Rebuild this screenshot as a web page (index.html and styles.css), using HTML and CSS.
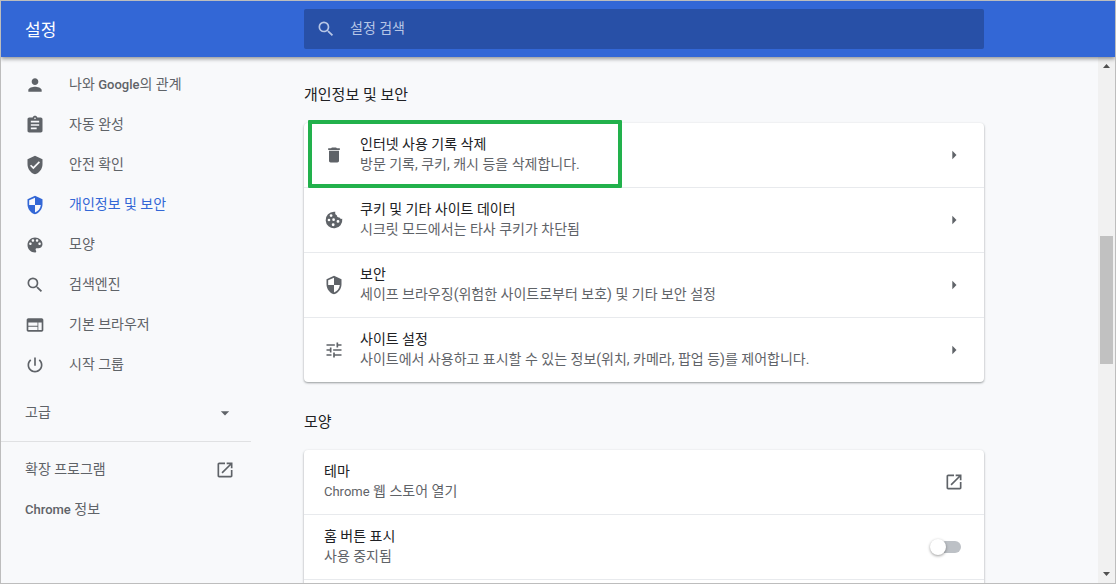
FILE: index.html
```html
<!DOCTYPE html>
<html lang="ko">
<head>
    <meta charset="UTF-8">
    <meta name="viewport" content="width=device-width, initial-scale=1.0">
    <title>설정</title>
    <link rel="stylesheet" href="styles.css">
</head>
<body>
    <header class="header">
        <h1>설정</h1>
        <label class="search">
            <svg class="icon" viewBox="0 0 24 24"><path d="M15.5 14h-.79l-.28-.27A6.47 6.47 0 0 0 16 9.5 6.5 6.5 0 1 0 9.5 16c1.61 0 3.09-.59 4.23-1.57l.27.28v.79l5 4.99L20.49 19l-4.99-5zm-6 0C7.01 14 5 11.99 5 9.5S7.01 5 9.5 5 14 7.01 14 9.5 11.99 14 9.5 14z"/></svg>
            <input type="search" placeholder="설정 검색" aria-label="설정 검색">
        </label>
    </header>
    <div class="body">
        <nav class="sidebar">
            <a href="#"><svg class="icon" viewBox="0 0 24 24"><path d="M12 12c2.21 0 4-1.79 4-4s-1.79-4-4-4-4 1.79-4 4 1.79 4 4 4zm0 2c-2.67 0-8 1.34-8 4v2h16v-2c0-2.66-5.33-4-8-4z"/></svg><span class="name">나와 <span class="latin">Google</span>의 관계</span></a>
            <a href="#"><svg class="icon" viewBox="0 0 24 24"><path d="M19 3h-4.18C14.4 1.84 13.3 1 12 1s-2.4.84-2.82 2H5c-1.1 0-2 .9-2 2v14c0 1.1.9 2 2 2h14c1.1 0 2-.9 2-2V5c0-1.1-.9-2-2-2zm-7 0c.55 0 1 .45 1 1s-.45 1-1 1-1-.45-1-1 .45-1 1-1zm2 14H7v-2h7v2zm3-4H7v-2h10v2zm0-4H7V7h10v2z"/></svg><span class="name">자동 완성</span></a>
            <a href="#"><svg class="icon" viewBox="0 0 24 24"><path d="M12 1L3 5v6c0 5.55 3.84 10.74 9 12 5.16-1.26 9-6.45 9-12V5l-9-4zm-2 16l-4-4 1.41-1.41L10 14.17l6.59-6.59L18 9l-8 8z"/></svg><span class="name">안전 확인</span></a>
            <a href="#" class="selected"><svg class="icon" viewBox="0 0 24 24"><path d="M12 1L3 5v6c0 5.55 3.84 10.74 9 12 5.16-1.26 9-6.45 9-12V5l-9-4zm0 10.99h7c-.53 4.12-3.28 7.79-7 8.94V12H5V6.3l7-3.11v8.8z"/></svg><span class="name">개인정보 및 보안</span></a>
            <a href="#"><svg class="icon" viewBox="0 0 24 24"><path d="M12 3c-4.97 0-9 4.03-9 9s4.03 9 9 9c.83 0 1.5-.67 1.5-1.5 0-.39-.15-.74-.39-1.01-.23-.26-.38-.61-.38-.99 0-.83.67-1.5 1.5-1.5H16c2.76 0 5-2.24 5-5 0-4.42-4.03-8-9-8zm-5.5 9c-.83 0-1.5-.67-1.5-1.5S5.67 9 6.5 9 8 9.67 8 10.5 7.33 12 6.5 12zm3-4C8.67 8 8 7.33 8 6.5S8.67 5 9.5 5s1.5.67 1.5 1.5S10.33 8 9.5 8zm5 0c-.83 0-1.5-.67-1.5-1.5S13.67 5 14.5 5s1.5.67 1.5 1.5S15.33 8 14.5 8zm3 4c-.83 0-1.5-.67-1.5-1.5S16.67 9 17.5 9s1.5.67 1.5 1.5-.67 1.5-1.5 1.5z"/></svg><span class="name">모양</span></a>
            <a href="#"><svg class="icon" viewBox="0 0 24 24"><path d="M15.5 14h-.79l-.28-.27A6.47 6.47 0 0 0 16 9.5 6.5 6.5 0 1 0 9.5 16c1.61 0 3.09-.59 4.23-1.57l.27.28v.79l5 4.99L20.49 19l-4.99-5zm-6 0C7.01 14 5 11.99 5 9.5S7.01 5 9.5 5 14 7.01 14 9.5 11.99 14 9.5 14z"/></svg><span class="name">검색엔진</span></a>
            <a href="#"><svg class="icon" viewBox="0 0 24 24"><path d="M20 4H4c-1.1 0-1.99.9-1.99 2L2 18c0 1.1.9 2 2 2h16c1.1 0 2-.9 2-2V6c0-1.1-.9-2-2-2zm-5 14H4v-4h11v4zm0-5H4V9h11v4zm5 5h-4V9h4v9z"/></svg><span class="name">기본 브라우저</span></a>
            <a href="#"><svg class="icon" viewBox="0 0 24 24"><path d="M13 3h-2v10h2V3zm4.83 2.17l-1.42 1.42C17.99 7.86 19 9.81 19 12c0 3.87-3.13 7-7 7s-7-3.13-7-7c0-2.19 1.01-4.14 2.58-5.42L6.17 5.17C4.23 6.82 3 9.26 3 12c0 4.97 4.03 9 9 9s9-4.03 9-9c0-2.74-1.23-5.18-3.17-6.83z"/></svg><span class="name">시작 그룹</span></a>
            <button class="advanced"><span class="name">고급</span><svg class="icon" viewBox="0 0 24 24"><path d="M7 10l5 5 5-5z"/></svg></button>
            <hr>
            <a href="#" class="spread"><span class="name">확장 프로그램</span><svg class="icon" viewBox="0 0 24 24"><path d="M19 19H5V5h7V3H5c-1.11 0-2 .9-2 2v14c0 1.1.89 2 2 2h14c1.1 0 2-.9 2-2v-7h-2v7zM14 3v2h3.59l-9.83 9.83 1.41 1.41L19 6.41V10h2V3h-7z"/></svg></a>
            <a href="#"><span class="name"><span class="latin">Chrome</span> 정보</span></a>
        </nav>
        <main class="main">
            <section>
                <h2>개인정보 및 보안</h2>
                <div class="card">
                    <button class="row highlight">
                        <svg class="icon" viewBox="0 0 24 24"><path d="M6 19c0 1.1.9 2 2 2h8c1.1 0 2-.9 2-2V7H6v12zM19 4h-3.5l-1-1h-5l-1 1H5v2h14V4z"/></svg>
                        <span class="text"><span class="label">인터넷 사용 기록 삭제</span><span class="sub">방문 기록, 쿠키, 캐시 등을 삭제합니다.</span></span>
                        <svg class="icon" viewBox="0 0 24 24"><path d="M10 7l5 5-5 5z"/></svg>
                    </button>
                    <button class="row">
                        <svg class="icon" viewBox="0 0 24 24"><path fill-rule="evenodd" d="M12 2a10 10 0 1 0 9.9 8.6c-1.5.5-2.9-.2-3.3-1.6-2 .3-3.3-.8-3.2-2.6C13.7 5.9 13 4 13.6 2.1A10 10 0 0 0 12 2zM8.5 5a1.7 1.7 0 1 0 0 3.4 1.7 1.7 0 0 0 0-3.4zM6 10.4a1.6 1.6 0 1 0 0 3.2 1.6 1.6 0 0 0 0-3.2zM11.5 10a1.6 1.6 0 1 0 0 3.2 1.6 1.6 0 0 0 0-3.2zM16.8 12a1.7 1.7 0 1 0 0 3.4 1.7 1.7 0 0 0 0-3.4zM11 16a1.7 1.7 0 1 0 0 3.4 1.7 1.7 0 0 0 0-3.4z"/></svg>
                        <span class="text"><span class="label">쿠키 및 기타 사이트 데이터</span><span class="sub">시크릿 모드에서는 타사 쿠키가 차단됨</span></span>
                        <svg class="icon" viewBox="0 0 24 24"><path d="M10 7l5 5-5 5z"/></svg>
                    </button>
                    <button class="row">
                        <svg class="icon" viewBox="0 0 24 24"><path d="M12 1L3 5v6c0 5.55 3.84 10.74 9 12 5.16-1.26 9-6.45 9-12V5l-9-4zm0 10.99h7c-.53 4.12-3.28 7.79-7 8.94V12H5V6.3l7-3.11v8.8z"/></svg>
                        <span class="text"><span class="label">보안</span><span class="sub">세이프 브라우징(위험한 사이트로부터 보호) 및 기타 보안 설정</span></span>
                        <svg class="icon" viewBox="0 0 24 24"><path d="M10 7l5 5-5 5z"/></svg>
                    </button>
                    <button class="row">
                        <svg class="icon" viewBox="0 0 24 24"><path d="M3 17v2h6v-2H3zM3 5v2h10V5H3zm10 16v-2h8v-2h-8v-2h-2v6h2zM7 9v2H3v2h4v2h2V9H7zm14 4v-2H11v2h10zm-6-4h2V7h4V5h-4V3h-2v6z"/></svg>
                        <span class="text"><span class="label">사이트 설정</span><span class="sub">사이트에서 사용하고 표시할 수 있는 정보(위치, 카메라, 팝업 등)를 제어합니다.</span></span>
                        <svg class="icon" viewBox="0 0 24 24"><path d="M10 7l5 5-5 5z"/></svg>
                    </button>
                </div>
            </section>
            <section>
                <h2>모양</h2>
                <div class="card">
                    <button class="row">
                        <span class="text"><span class="label">테마</span><span class="sub"><span class="latin">Chrome</span> 웹 스토어 열기</span></span>
                        <svg class="icon" viewBox="0 0 24 24"><path d="M19 19H5V5h7V3H5c-1.11 0-2 .9-2 2v14c0 1.1.89 2 2 2h14c1.1 0 2-.9 2-2v-7h-2v7zM14 3v2h3.59l-9.83 9.83 1.41 1.41L19 6.41V10h2V3h-7z"/></svg>
                    </button>
                    <label class="row">
                        <span class="text"><span class="label">홈 버튼 표시</span><span class="sub">사용 중지됨</span></span>
                        <input type="checkbox" class="toggle">
                    </label>
                    <div class="row"></div>
                </div>
            </section>
        </main>
        <div class="scrollbar">
            <svg viewBox="0 0 17 17"><path d="M5 11h7L8.5 7z"/></svg>
            <div class="track"><div class="thumb"></div></div>
            <svg viewBox="0 0 17 17"><path d="M5 6h7l-3.5 4z"/></svg>
        </div>
    </div>
</body>
</html>
```

FILE: styles.css
```css
*, *::before, *::after {
    padding: 0;
    margin: 0;
    box-sizing: border-box;
}
body {
    display: flex;
    flex-direction: column;
    height: 100vh;
    overflow: hidden;
    border: 1px solid #bdbdbd;
    background-color: #f8f9fb;
    color: #5f6368;
    font-family: Roboto, "Noto Sans CJK KR", sans-serif;
    font-size: 14px;
    line-height: 20px;
}
a, button, input {
    font: inherit;
    color: inherit;
    text-decoration: none;
    background: none;
    border: none;
    outline: none;
}
.icon {
    width: 20px;
    height: 20px;
    flex-shrink: 0;
    fill: currentColor;
}
.latin {
    font-size: 13px;
}

/* Header */
.header {
    position: relative;
    z-index: 2;
    display: grid;
    grid-template-columns: 303px minmax(0, 680px);
    align-items: center;
    flex-shrink: 0;
    height: 56px;
    background-color: #3367d6;
    color: #ffffff;
    box-shadow: 0 2px 4px rgba(0, 0, 0, 0.4);
}
.header h1 {
    padding: 2px 0 0 24px;
    font-size: 17px;
    font-weight: 400;
}
.search {
    display: flex;
    align-items: center;
    gap: 14px;
    height: 40px;
    padding: 0 12px;
    border-radius: 2px;
    background-color: #2850a7;
    color: #b7c6e6;
}
.search input {
    flex: 1;
    min-width: 0;
    padding-bottom: 2px;
}
.search input::placeholder {
    color: #b7c6e6;
}

/* Sidebar */
.body {
    display: flex;
    flex: 1;
    min-height: 0;
}
.sidebar {
    width: 250px;
    flex-shrink: 0;
    padding-top: 8px;
}
.sidebar a, .advanced {
    display: flex;
    align-items: center;
    gap: 24px;
    width: 100%;
    height: 40px;
    padding: 0 16px 0 24px;
}
.name {
    padding-bottom: 2px;
}
.sidebar .latin {
    font-weight: 500;
}
.sidebar .selected {
    color: #3367d6;
}
.sidebar .spread, .advanced {
    justify-content: space-between;
}
.advanced {
    margin-top: 8px;
}
.sidebar hr {
    margin: 8px 0;
    border: none;
    border-top: 1px solid #e0e1e3;
}

/* Content */
.main {
    flex: 1;
    min-width: 0;
    overflow: hidden;
    padding: 28px 20px 0 53px;
}
.main section {
    max-width: 680px;
    margin-bottom: 30px;
}
.main h2 {
    margin-bottom: 18px;
    color: #202124;
    font-size: 15px;
    font-weight: 400;
}
.card {
    border-radius: 4px;
    background-color: #ffffff;
    box-shadow: 0 1px 2px rgba(60, 64, 67, 0.4), 0 1px 3px rgba(60, 64, 67, 0.15);
}
.row {
    position: relative;
    display: flex;
    align-items: center;
    gap: 16px;
    width: 100%;
    min-height: 64px;
    padding: 0 20px;
    text-align: left;
}
.row + .row {
    min-height: 65px;
    border-top: 1px solid #e8eaed;
}
.text {
    flex: 1;
    min-width: 0;
    padding-bottom: 2px;
}
.label, .sub {
    display: block;
}
.label {
    color: #202124;
}
.highlight {
    z-index: 1;
}
.highlight::after {
    content: "";
    position: absolute;
    top: -3px;
    left: 4px;
    width: 314px;
    height: 68px;
    border: 4px solid #22b14c;
    border-radius: 1px;
}
.toggle {
    appearance: none;
    position: relative;
    width: 28px;
    height: 12px;
    margin-right: 3px;
    border-radius: 6px;
    background-color: #bdc1c6;
}
.toggle::before {
    content: "";
    position: absolute;
    top: -2px;
    left: -3px;
    width: 16px;
    height: 16px;
    border-radius: 50%;
    background-color: #ffffff;
    box-shadow: 0 1px 3px rgba(0, 0, 0, 0.4);
}

/* Scrollbar */
.scrollbar {
    display: flex;
    flex-direction: column;
    width: 17px;
    flex-shrink: 0;
    background-color: #f1f1f1;
}
.scrollbar svg {
    width: 17px;
    height: 17px;
    fill: #505050;
}
.track {
    flex: 1;
    padding: 162px 2px 0;
}
.thumb {
    height: 128px;
    background-color: #c1c1c1;
}
```
